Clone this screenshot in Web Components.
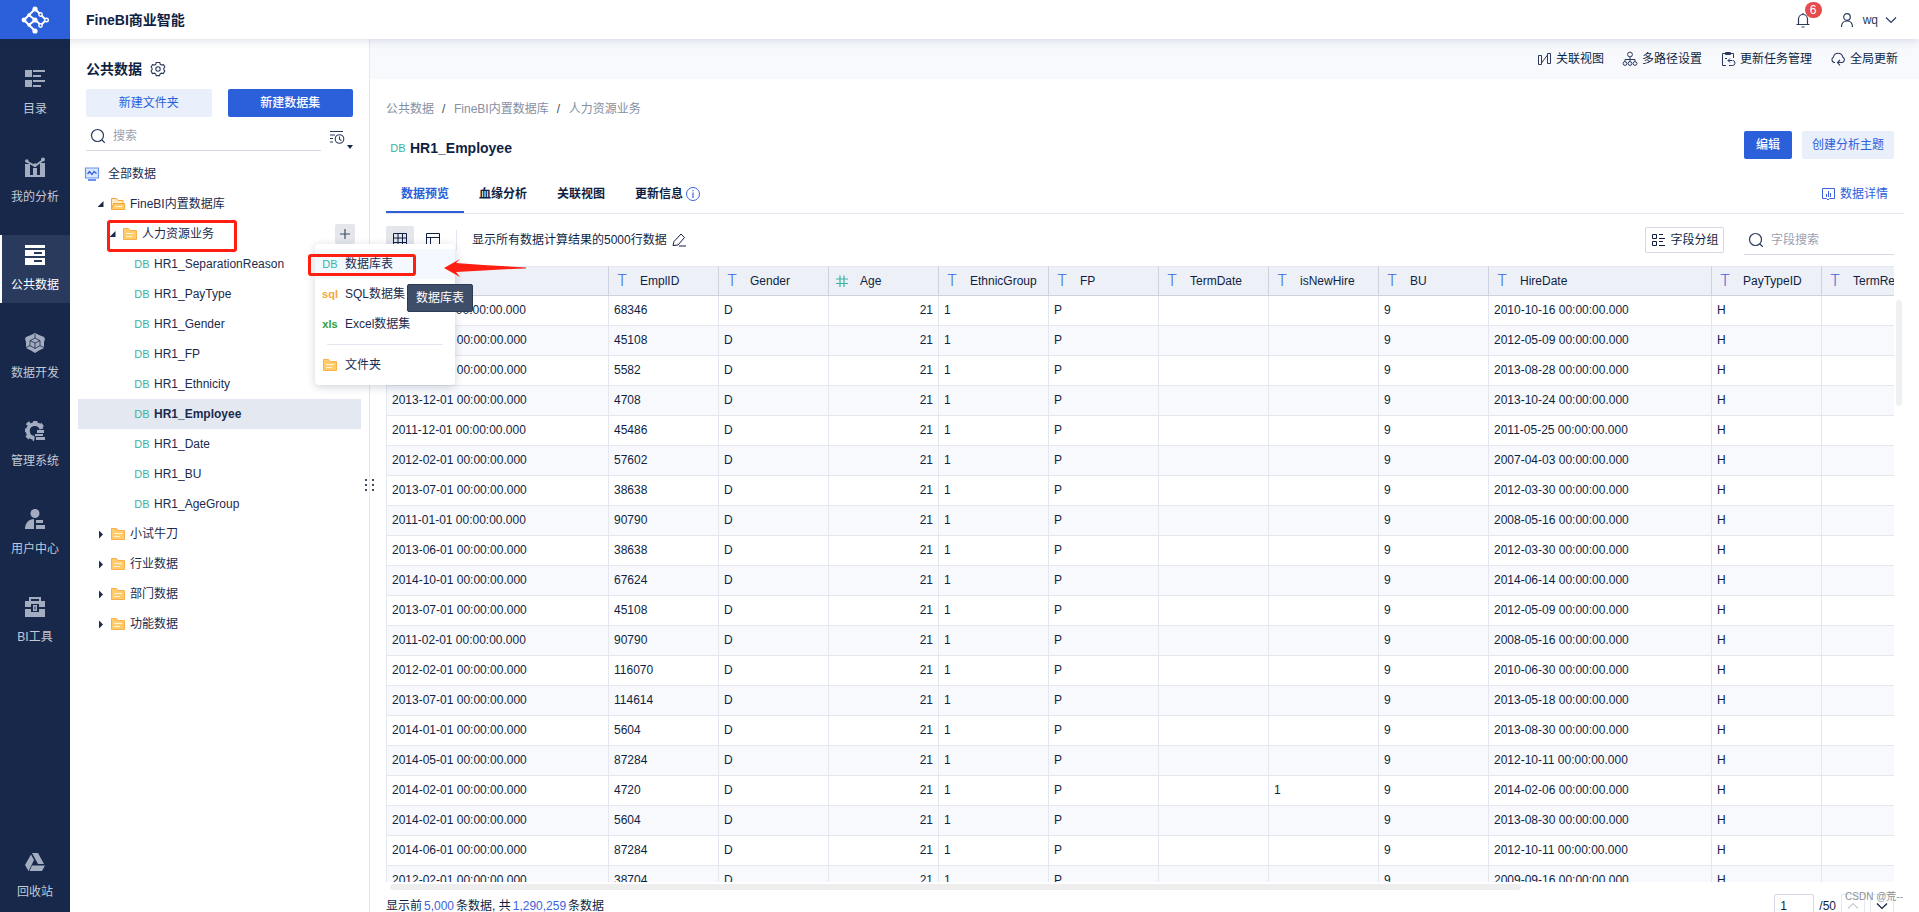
<!DOCTYPE html>
<html lang="zh-CN">
<head>
<meta charset="utf-8">
<title>FineBI商业智能</title>
<style>
  html, body { margin: 0; height: 100%; }
  body {
    font: 12px/20px "Liberation Sans", "Noto Sans CJK SC", sans-serif;
    color: #0f1f43;
    background: #fff;
    overflow: hidden;
    --blue: #2c60db;
    --pale: #e9effb;
    --line: #e4e7ef;
    --navy: #17284b;
    --red: #ff1f12;
  }
</style>
</head>
<body>
<bi-app></bi-app>

<script>
const ICONS = {
  logo: [28, '<g stroke="#fff" stroke-width="2" fill="none"><path d="M14 3 3 14l11 11 M14 14l-6 5 M14 14l6 5 M14 3l6 6 5 5-5 5 M14 14l-6-5"/></g><g fill="#fff"><circle cx="14" cy="3" r="2.6"/><circle cx="3" cy="14" r="2.4"/><circle cx="14" cy="25" r="2.6"/><circle cx="14" cy="14" r="2.6"/><circle cx="8" cy="9" r="1.8"/><circle cx="8" cy="19" r="1.8"/></g><g fill="#2c60db" stroke="#fff" stroke-width="1.4"><circle cx="19.500" cy="8.500" r="1.7"/><circle cx="25.500" cy="14" r="1.8"/><circle cx="19.500" cy="19.500" r="1.7"/></g>'],
  catalog: [20, '<g fill="currentColor"><path d="M0 1h7v7H0zM0 11h7v7H0zM8 1h12v2H8zM8 6h8v2H8zM8 11h12v2H8zM8 16h8v2H8z"/></g>'],
  analysis: [20, '<path d="M1 4l9 5 8-6" fill="none" stroke="currentColor" stroke-width="2"/><g fill="currentColor"><circle cx="1.800" cy="4" r="1.800"/><circle cx="18" cy="2.500" r="2"/><circle cx="10" cy="8" r="1.800"/><path d="M0 7h5v11H0zM8 11h4v7H8zM15 6h5v12h-5zM0 18h20v2H0z"/></g>'],
  data: [20, '<path fill="currentColor" fill-rule="evenodd" d="M0 0h20v3H0zM0 5h20v6H0zM9 7v2h8V7zM0 13h20v7H0zM9 15v2h8v-2z"/>'],
  dev: [20, '<path fill="currentColor" d="M10 0l4 2 5 2 1 2-1 3v6l-5 2.500L10 20l-4-2.500L1 15V9L0 6l1-2 5-2z"/><path d="M10 5l5 2.600v5L10 15.500l-5-2.900v-5zM10 10v5M10 10l5-2.400M10 10L5 7.600M5 12.600l-4 2M15 12.600l4 2M10 5V1" fill="none" stroke="#17284b" stroke-width=".8"/>'],
  manage: [20, '<g fill="none" stroke="currentColor"><path d="M16.500 8A7 7 0 1 0 9.500 17" stroke-width="4"/><path d="M17.500 6A9 9 0 1 0 9 18.500" stroke-width="3" stroke-dasharray="4 3.400"/></g><path fill="currentColor" d="M12 9h7v3h-7zM10 13h8v2h-8zM11 16h9v3h-9z"/>'],
  user2: [20, '<g fill="currentColor"><circle cx="10" cy="4.500" r="4.500"/><path d="M0 20c0-6 4-10 9-10v10zM11 11h7v3h-7zM11 16h9v4h-9z"/></g>'],
  tools: [20, '<path fill="currentColor" fill-rule="evenodd" d="M4 0h12v4h4v6h-6V7H6v3H0V4h4zM6 2v2h8V2zM0 12h6v3h8v-3h6v8H0zM8 8h4v6H8zM9.500 9.500v3h1v-3z"/>'],
  recycle: [20, '<g fill="currentColor"><path d="M7 1h6l6 11h-6zM6 2.500l3 5.500-5.500 11L0 13zM7 13.500h13L17 19H4.500z"/></g>'],
  gear: [16, '<g fill="none" stroke="currentColor" stroke-width="1.100"><path d="M6.200 1.500h3.600l.5 1.800 1.300.8 1.900-.5 1.300 2.400-1 1.400v1.300l1 1.400-1.500 2.500-1.900-.4-1.300.7-.6 1.700H6.200l-.6-1.700-1.300-.7-1.900.4L1.100 10l1-1.400V7.400L1.100 6l1.400-2.400 1.900.5 1.300-.8z"/><circle cx="8" cy="8" r="2.200"/></g>'],
  search: [16, '<g fill="none" stroke="currentColor" stroke-width="1.200"><circle cx="7.500" cy="7.500" r="6"/><path d="M12 12l2.800 2.800"/></g>'],
  filter: [16, '<g fill="none" stroke="currentColor" stroke-width="1.100"><path d="M1 2.500h13M1 6h5M1 9.500h3M1 13h3"/><circle cx="10.500" cy="10" r="4.300"/><path d="M10.500 7.500v3l2 1"/></g>'],
  screen: [16, '<path d="M1.500 2h13v10h-13z" fill="#dbe7ff" stroke="#6a92ea" stroke-width="1.200"/><path d="M3.500 8l2-2.500 2.500 3 2-3 2.500 2" fill="none" stroke="#2c60db" stroke-width="1.300"/><path d="M4 14h8" stroke="#6a92ea" stroke-width="2"/>'],
  folder: [16, '<path d="M1.500 2.500h5l1.500 2h6.500v9h-13z" fill="#ffcb6b" stroke="#f9b04c"/><path d="M4 7.500h8M4 10.500h6" stroke="#fff2d6"/>'],
  folderOpen: [16, '<path d="M1.500 13.500v-11h5l1.500 2h5v3" fill="#ffe9c2" stroke="#f5a83a"/><path d="M1.500 13.500l2-6h11.200v6z" fill="#ffcb6b" stroke="#f5a83a"/><path d="M5 10.500h7" stroke="#fff2d6"/>'],
  right: [16, '<path d="M5 4.500l4 4-4 4z" fill="currentColor"/>'],
  down: [16, '<path d="M9.500 5v6h-6z" fill="currentColor"/>'],
  plus: [16, '<path d="M3 8h10M8 3v10" stroke="currentColor" stroke-width="1.200"/>'],
  relation: [16, '<g fill="none" stroke="currentColor"><path d="M2.500 4.500h3v9h-3zM11.500 2.500h3v10h-3zM5.500 12l6-8"/></g>'],
  paths: [16, '<g fill="none" stroke="currentColor"><circle cx="8" cy="3.500" r="2.400"/><circle cx="3" cy="12.500" r="1.900"/><circle cx="8" cy="12.500" r="1.900"/><circle cx="13" cy="12.500" r="1.900"/><path d="M8 6v4.500M3 10.500V8.500h10v2"/></g>'],
  task: [16, '<g fill="none" stroke="currentColor"><path d="M6 14.500H2.500v-12h11V7M5.500 1.500h5v2h-5zM5 7.500h2M8 9.500h4M10 7.500l-2 2 2 2M9 14.500h3.500a2.500 2.500 0 0 0 0-5"/></g>'],
  cloud: [16, '<g fill="none" stroke="currentColor" stroke-width="1.100"><path d="M5 11.500H4A3 3 0 0 1 3.500 6 4.700 4.700 0 0 1 12.700 6a3 3 0 0 1-.2 5.500H8M10 9l-2.500 2.500L10 14.500"/></g>'],
  bell: [16, '<g fill="none" stroke="currentColor" stroke-width="1.200"><path d="M1.500 12.500h13M3.500 12.500V7a4.500 4.500 0 0 1 9 0v5.500M6.500 15h3M8 1v1.500"/></g>'],
  user: [16, '<g fill="none" stroke="currentColor" stroke-width="1.200"><circle cx="8" cy="5" r="3.300"/><path d="M2.500 15c0-3.500 2-6 5.500-6s5.500 2.500 5.500 6"/></g>'],
  chevron: [16, '<path d="M3 5.500l5 5 5-5" fill="none" stroke="currentColor" stroke-width="1.200"/>'],
  chevronUp: [16, '<path d="M3 10.500l5-5 5 5" fill="none" stroke="currentColor" stroke-width="1.200"/>'],
  info: [16, '<circle cx="8" cy="8" r="6.500" fill="none" stroke="currentColor"/><path d="M8 6.500V12M8 4v1.300" stroke="currentColor" stroke-width="1.200"/>'],
  detail: [16, '<g fill="none" stroke="currentColor"><path d="M2.500 2.500h12v10H9.500L8 14l-1.500-1.500h-4zM6.500 8v3M8.500 5v6M10.500 7v4"/></g>'],
  grid: [16, '<path d="M1.500 1.500h13v13h-13zM1.500 6h13M1.500 10.500h13M6 1.500v13M10.500 1.500v13" fill="none" stroke="currentColor"/>'],
  layout: [16, '<path d="M1.500 1.500h13v13h-13zM1.500 5.500h13M5.500 5.500v9" fill="none" stroke="currentColor"/>'],
  edit: [16, '<path d="M2 13.500l1-4L10 2l3.500 3.500-6.500 7.500zM8 14h7" fill="none" stroke="currentColor"/>'],
  group: [16, '<path d="M2.500 2.500h4v4h-4zM2.500 9.500h4v4h-4zM9 2.500h4M9 6.500h6M9 9.500h4M9 13.500h6" fill="none" stroke="currentColor"/>'],
  hash: [16, '<path d="M2 6h12M2 10.500h12M6 2.500v11.500M10 2.500v11.500" stroke="#3bb3a6" stroke-width="1.200" fill="none"/>']
};

function define(name, css, html, setup) {
  const template = document.createElement('template');
  template.innerHTML = `<style>*{box-sizing:border-box}button,input{font:inherit;color:inherit;margin:0}${css}</style>${html}`;
  customElements.define(name, class extends HTMLElement {
    connectedCallback() {
      if (this.shadowRoot) return;
      const root = this.attachShadow({ mode: 'open' });
      root.append(template.content.cloneNode(true));
      if (setup) setup(root, this);
    }
  });
}

/* Line icon, chosen by its name attribute. */
define('bi-icon', ':host{display:inline-flex;flex:none;width:16px;height:16px}svg{display:block;width:100%;height:100%}', '', (root, host) => {
  const [size, body] = ICONS[host.getAttribute('name')];
  root.innerHTML += `<svg viewBox="0 0 ${size} ${size}" aria-hidden="true">${body}</svg>`;
});

/* Short letter mark for a kind of data set. */
define('bi-mark', `
  :host{display:inline-flex;flex:none;width:16px;justify-content:center;font-size:11px;color:#3bb3a6}
  :host([kind=sql]){color:#f5a83a;font-weight:bold}
  :host([kind=xls]){color:#2f9e3a;font-weight:bold}
  :host([kind=text]){color:#3c63dd;font:300 16px/20px Roboto,"Liberation Sans",sans-serif}`, '<slot></slot>');

define('bi-button', `
  :host{display:inline-flex}
  button{flex:1;height:28px;padding:0 10px;border:0;border-radius:2px;background:var(--pale);color:var(--blue);white-space:nowrap}
  :host([primary]) button{padding:0 12px;background:var(--blue);color:#fff;font-weight:500}`,
  '<button type="button"><slot></slot></button>');

define('bi-search', `
  :host{display:flex}
  label{display:flex;flex:1;align-items:center;gap:7px;padding:0 4px;border-bottom:1px solid #d4d8e2;color:#2b3a5c}
  input{flex:1;min-width:0;width:0;padding:0;border:0;outline:0;background:none;line-height:20px}
  input::placeholder{color:#9aa1b0;opacity:1}`,
  '<label><bi-icon name="search"></bi-icon><input type="text"></label>',
  (root, host) => {
    const input = root.querySelector('input');
    input.placeholder = host.getAttribute('hint');
    input.setAttribute('aria-label', input.placeholder);
  });

define('bi-topbar', `
  :host{display:flex;height:39px;background:#fff;box-shadow:0 2px 8px rgba(23,40,75,.14);position:relative;z-index:2}
  .logo{width:70px;display:flex;align-items:center;justify-content:center;background:var(--blue)}
  .logo bi-icon{width:28px;height:28px}
  h1{flex:1;margin:0 16px;font-size:14px;line-height:40px}
  .tools{display:flex;align-items:center;gap:28px;padding-right:20px;color:#2b3a5c}
  button{display:flex;align-items:center;border:0;padding:0;background:none}
  .bell{position:relative}
  .badge{position:absolute;left:10px;top:-10px;width:17px;height:16px;border-radius:8px;background:#e64c4c;color:#fff;line-height:16px;text-align:center}
  .user span{padding:0 5px 0 8px}`,
  `<div class="logo"><bi-icon name="logo"></bi-icon></div>
   <h1>FineBI商业智能</h1>
   <div class="tools">
     <button class="bell" type="button" aria-label="消息"><bi-icon name="bell"></bi-icon><span class="badge">6</span></button>
     <button class="user" type="button"><bi-icon name="user"></bi-icon><span>wq</span><bi-icon name="chevron"></bi-icon></button>
   </div>`);

define('bi-nav-item', `
  :host{display:block}
  a{display:flex;flex-direction:column;align-items:center;gap:11px;height:68px;padding-top:10px;color:#a4adbf;text-decoration:none;line-height:18px;white-space:nowrap}
  span{color:#c3c9d5}
  bi-icon{width:20px;height:20px}
  :host([active]) a{color:#fff;background:#293a5c;box-shadow:inset 2px 0 #fff}
  :host([active]) span{color:#fff}`,
  '<a href="#"><span><slot></slot></span></a>',
  (root, host) => {
    const icon = document.createElement('bi-icon');
    icon.setAttribute('name', host.getAttribute('icon'));
    root.querySelector('a').prepend(icon);
  });

define('bi-nav', `
  :host{display:flex;flex-direction:column;width:70px;flex:none;background:var(--navy);padding:20px 0 2px}
  nav{display:flex;flex-direction:column;gap:20px;flex:1}
  .last{margin-top:auto}`,
  `<nav>
    <bi-nav-item icon="catalog">目录</bi-nav-item>
    <bi-nav-item icon="analysis">我的分析</bi-nav-item>
    <bi-nav-item icon="data" active>公共数据</bi-nav-item>
    <bi-nav-item icon="dev">数据开发</bi-nav-item>
    <bi-nav-item icon="manage">管理系统</bi-nav-item>
    <bi-nav-item icon="user2">用户中心</bi-nav-item>
    <bi-nav-item icon="tools">BI工具</bi-nav-item>
    <bi-nav-item class="last" icon="recycle">回收站</bi-nav-item>
  </nav>`);

define('bi-tree-row', `
  :host{display:flex;align-items:center;height:30px;margin:0 8px;padding-left:16px;position:relative;white-space:nowrap;color:#1c2b4d}
  :host([level="0"]){padding-left:6px}
  :host([level="2"]){padding-left:28px}
  :host([level="3"]){padding-left:56px}
  :host([selected]){background:#e4e8f1;font-weight:bold}
  .label{flex:1;padding-left:4px}
  :host([level="0"]) .label{padding-left:8px}
  bi-mark{font-weight:normal}`,
  '<span class="label"><slot></slot></span><slot name="action"></slot>',
  (root, host) => {
    const label = root.querySelector('.label');
    const fold = host.getAttribute('fold');
    const kind = host.getAttribute('kind');
    let html = fold ? `<bi-icon name="${fold}"></bi-icon>` : '';
    html += kind === 'db' ? '<bi-mark>DB</bi-mark>' : `<bi-icon name="${kind}"></bi-icon>`;
    label.insertAdjacentHTML('beforebegin', html);
  });

/* Red frame drawn over a row to call attention to it. */
define('bi-highlight', ':host{position:absolute;border:3px solid var(--red);border-radius:3px;pointer-events:none}', '');

define('bi-menu', `
  :host{display:block;width:140px;padding:5px 0;background:#fff;border-radius:4px;box-shadow:0 2px 8px rgba(23,40,75,.2);font-weight:normal}
  ul{list-style:none;margin:0;padding:0}
  li{position:relative}
  button{display:flex;align-items:center;gap:7px;width:100%;height:30px;padding:0 7px;border:0;background:none;white-space:nowrap;color:#1c2b4d}
  .on button{background:#f3f9ff}
  .sep{height:1px;margin:5px 12px;background:var(--line)}
  bi-highlight{left:-7px;top:5px;width:108px;height:22px}
  .tip{position:absolute;left:92px;top:35px;z-index:1;height:28px;padding:0 8px;border:1px solid #2c3a52;border-radius:2px;background:#3f4e68;color:#fff;line-height:26px;white-space:nowrap}
  svg{position:absolute;left:129px;top:10px;width:82px;height:18px}`,
  `<ul>
    <li class="on"><button type="button"><bi-mark>DB</bi-mark>数据库表</button>
      <bi-highlight></bi-highlight>
      <svg viewBox="0 0 82 18" aria-hidden="true"><path d="M0 9L16 0l-4 4c24 2 46 3 70 4.500v1C58 10 36 12 12 13l4 5z" fill="#ff1f12"/></svg>
      <span class="tip" role="tooltip">数据库表</span></li>
    <li><button type="button"><bi-mark kind="sql">sql</bi-mark>SQL数据集</button></li>
    <li><button type="button"><bi-mark kind="xls">xls</bi-mark>Excel数据集</button></li>
    <li class="sep" role="separator"></li>
    <li><button type="button"><bi-icon name="folder"></bi-icon>文件夹</button></li>
  </ul>`);

define('bi-sidebar', `
  :host{display:block;width:300px;flex:none;border-right:1px solid var(--line);position:relative;z-index:1;background:#fff}
  .head{display:flex;align-items:center;gap:8px;padding:20px 16px 10px}
  h2{margin:0;font-size:14px;line-height:20px}
  .head bi-icon{color:#2b3a5c}
  .buttons{display:grid;grid-template-columns:1fr 1fr;gap:16px;padding:0 16px}
  .find{display:flex;padding:0 16px;height:34px;position:relative}
  .find bi-search{width:235px;padding-top:5px}
  .sort{display:flex;align-items:center;margin-left:8px;border:0;background:none;padding:6px 0 0;color:#2b3a5c}
  .sort i{position:absolute;right:16px;bottom:2px;border:3px solid transparent;border-top:4px solid #17284b;border-bottom:0}
  .tree{padding-top:8px}
  .add{display:flex;align-items:center;justify-content:center;width:20px;height:20px;margin-right:6px;border:0;border-radius:2px;padding:0;background:#e4e6eb;color:#3d4d66}
  bi-highlight{left:29px;top:1px;width:130px;height:32px}
  bi-menu{position:absolute;left:237px;top:25px;z-index:3}
  .grip{position:absolute;right:-5px;top:440px;width:9px;height:14px;background:radial-gradient(circle at 1px 1px,#3d4d66 1px,transparent 1px) 0 0/7px 5px}`,
  `<div class="head"><h2>公共数据</h2><bi-icon name="gear"></bi-icon></div>
   <div class="buttons"><bi-button>新建文件夹</bi-button><bi-button primary>新建数据集</bi-button></div>
   <div class="find"><bi-search hint="搜索"></bi-search><button class="sort" type="button" aria-label="排序"><bi-icon name="filter"></bi-icon><i></i></button></div>
   <div class="tree">
     <bi-tree-row level="0" kind="screen">全部数据</bi-tree-row>
     <bi-tree-row level="1" fold="down" kind="folderOpen">FineBI内置数据库</bi-tree-row>
     <bi-tree-row level="2" fold="down" kind="folder">人力资源业务
       <button slot="action" class="add" type="button" aria-label="新建"><bi-icon name="plus"></bi-icon></button>
       <bi-highlight slot="action"></bi-highlight>
       <bi-menu slot="action"></bi-menu>
     </bi-tree-row>
     <bi-tree-row level="3" kind="db">HR1_SeparationReason</bi-tree-row>
     <bi-tree-row level="3" kind="db">HR1_PayType</bi-tree-row>
     <bi-tree-row level="3" kind="db">HR1_Gender</bi-tree-row>
     <bi-tree-row level="3" kind="db">HR1_FP</bi-tree-row>
     <bi-tree-row level="3" kind="db">HR1_Ethnicity</bi-tree-row>
     <bi-tree-row level="3" kind="db" selected>HR1_Employee</bi-tree-row>
     <bi-tree-row level="3" kind="db">HR1_Date</bi-tree-row>
     <bi-tree-row level="3" kind="db">HR1_BU</bi-tree-row>
     <bi-tree-row level="3" kind="db">HR1_AgeGroup</bi-tree-row>
     <bi-tree-row level="1" fold="right" kind="folder">小试牛刀</bi-tree-row>
     <bi-tree-row level="1" fold="right" kind="folder">行业数据</bi-tree-row>
     <bi-tree-row level="1" fold="right" kind="folder">部门数据</bi-tree-row>
     <bi-tree-row level="1" fold="right" kind="folder">功能数据</bi-tree-row>
   </div>
   <div class="grip"></div>`);

const COLUMNS = ['date', 'EmplID', 'Gender', 'Age', 'EthnicGroup', 'FP', 'TermDate', 'isNewHire', 'BU', 'HireDate', 'PayTypeID', 'TermReason'];
const ROWS = [
  ['2013-11-01', '68346', '2010-10-16'], ['2013-02-01', '45108', '2012-05-09'], ['2013-12-01', '5582', '2013-08-28'],
  ['2013-12-01', '4708', '2013-10-24'], ['2011-12-01', '45486', '2011-05-25'], ['2012-02-01', '57602', '2007-04-03'],
  ['2013-07-01', '38638', '2012-03-30'], ['2011-01-01', '90790', '2008-05-16'], ['2013-06-01', '38638', '2012-03-30'],
  ['2014-10-01', '67624', '2014-06-14'], ['2013-07-01', '45108', '2012-05-09'], ['2011-02-01', '90790', '2008-05-16'],
  ['2012-02-01', '116070', '2010-06-30'], ['2013-07-01', '114614', '2013-05-18'], ['2014-01-01', '5604', '2013-08-30'],
  ['2014-05-01', '87284', '2012-10-11'], ['2014-02-01', '4720', '2014-02-06', '1'], ['2014-02-01', '5604', '2013-08-30'],
  ['2014-06-01', '87284', '2012-10-11'], ['2012-02-01', '38704', '2009-09-16']
];

define('bi-data-table', `
  :host{display:flex;flex-direction:column;flex:1;min-height:0;position:relative}
  .view{flex:1;min-height:0;overflow:hidden;border-left:1px solid var(--line)}
  table{border-collapse:separate;border-spacing:0;table-layout:fixed;width:1545px}
  col{width:110px}
  col.first{width:222px}
  col.wide{width:223px}
  th,td{height:30px;padding:0 5px;border-right:1px solid var(--line);border-bottom:1px solid var(--line);text-align:left;font-weight:normal;white-space:nowrap;overflow:hidden;line-height:20px}
  td{padding-bottom:2px}
  th{background:#edf0f6;border-color:#cdd2de;border-top:1px solid var(--line)}
  th div{display:flex;align-items:center;gap:10px}
  tbody tr:nth-child(even){background:#f7f9fd}
  td.num{text-align:right}
  .h{height:6px;width:75%;margin:2px 0 4px 4px;border-radius:3px;background:#eee}
  .v{position:absolute;right:-8px;top:34px;width:6px;height:106px;border-radius:3px;background:#eff0f2}`,
  `<div class="view"><table><colgroup></colgroup><thead><tr></tr></thead><tbody></tbody></table></div><div class="h"></div><div class="v"></div>`,
  root => {
    root.querySelector('colgroup').innerHTML = COLUMNS.map((c, i) => `<col class="${i === 0 ? 'first' : i === 9 ? 'wide' : ''}">`).join('');
    root.querySelector('thead tr').innerHTML = COLUMNS.map(c =>
      `<th scope="col"><div>${c === 'Age' ? '<bi-icon name="hash"></bi-icon>' : '<bi-mark kind="text">T</bi-mark>'}${c}</div></th>`).join('');
    root.querySelector('tbody').innerHTML = ROWS.map(([date, id, hire, isNew = '']) => {
      const cells = [date + ' 00:00:00.000', id, 'D', '21', '1', 'P', '', isNew, '9', hire + ' 00:00:00.000', 'H', ''];
      return '<tr>' + cells.map((v, i) => `<td${i === 3 ? ' class="num"' : ''}>${v}</td>`).join('') + '</tr>';
    }).join('');
  });

define('bi-main', `
  :host{display:flex;flex-direction:column;flex:1;min-width:0}
  a{color:inherit;text-decoration:none}
  .bar{display:flex;justify-content:flex-end;align-items:center;gap:18px;height:40px;padding-right:21px;background:#f7f9fd;flex:none}
  .bar a,.detail{display:flex;align-items:center;gap:4px}
  .bar bi-icon{color:#2b3a5c}
  .body{display:flex;flex-direction:column;flex:1;min-height:0;padding:20px 25px 0 16px}
  .crumbs{display:flex;gap:8px;color:#868fa3;flex:none}
  .crumbs i{width:4px;font-style:normal;color:#3d4d66}
  .title{display:flex;align-items:flex-end;gap:10px;margin-top:12px;flex:none}
  h2{display:flex;align-items:center;gap:4px;flex:1;margin:0;padding-left:4px;font-size:14px;line-height:22px}
  h2 bi-mark{font-weight:normal}
  .tabs{display:flex;height:39px;margin:16px -10px 0 0;border-bottom:1px solid var(--line);font-weight:bold;flex:none}
  .tabs a{display:flex;align-items:center;gap:2px;padding:0 15px}
  .tabs a.on{color:var(--blue);box-shadow:inset 0 -2px var(--blue)}
  .tabs bi-icon{color:#3c63dd}
  .tabs .detail{margin-left:auto;padding-right:16px;color:var(--blue);font-weight:normal;gap:4px}
  .tools{display:flex;align-items:center;height:52px;flex:none}
  .tools button{display:flex;align-items:center;justify-content:center;border:0;border-radius:2px;padding:0;width:28px;height:28px;background:none}
  .tools button.on{background:#e4e6eb}
  .tools .second{margin-left:5px}
  .rule{width:1px;height:20px;margin:0 15px 0 9px;background:var(--line)}
  .tools p{display:flex;align-items:center;gap:4px;margin:0;flex:1}
  .tools button.group{width:79px;height:26px;gap:4px;border:1px solid #d4d8e2;margin-right:20px}
  bi-search{width:150px;height:29px}
  .foot{display:flex;align-items:center;height:24px;margin-bottom:-6px;flex:none}
  .foot span{flex:1}
  b{margin:0 2px;font-weight:normal;color:#3c63dd}
  .foot input{width:40px;height:24px;padding:0 5px;border:1px solid #d4d8e2;border-radius:2px;margin-right:5px;background:#fff}
  .foot label{display:flex;align-items:center}
  .foot button{display:flex;align-items:center;justify-content:center;width:24px;height:24px;padding:0;margin-left:5px;border:1px solid var(--line);border-radius:2px;background:#fff}
  .foot button:disabled{color:#c6ccd8}`,
  `<div class="bar">
     <a href="#"><bi-icon name="relation"></bi-icon>关联视图</a>
     <a href="#"><bi-icon name="paths"></bi-icon>多路径设置</a>
     <a href="#"><bi-icon name="task"></bi-icon>更新任务管理</a>
     <a href="#"><bi-icon name="cloud"></bi-icon>全局更新</a>
   </div>
   <div class="body">
     <nav class="crumbs"><a href="#">公共数据</a><i>/</i><a href="#">FineBI内置数据库</a><i>/</i><a href="#">人力资源业务</a></nav>
     <div class="title"><h2><bi-mark>DB</bi-mark>HR1_Employee</h2><bi-button primary>编辑</bi-button><bi-button>创建分析主题</bi-button></div>
     <nav class="tabs">
       <a href="#" class="on">数据预览</a><a href="#">血缘分析</a><a href="#">关联视图</a><a href="#">更新信息<bi-icon name="info"></bi-icon></a>
       <a href="#" class="detail"><bi-icon name="detail"></bi-icon>数据详情</a>
     </nav>
     <div class="tools">
       <button type="button" class="on" aria-label="表格"><bi-icon name="grid"></bi-icon></button>
       <button type="button" class="second" aria-label="结构"><bi-icon name="layout"></bi-icon></button>
       <span class="rule"></span>
       <p>显示所有数据计算结果的5000行数据<bi-icon name="edit"></bi-icon></p>
       <button type="button" class="group"><bi-icon name="group"></bi-icon>字段分组</button>
       <bi-search hint="字段搜索"></bi-search>
     </div>
     <bi-data-table></bi-data-table>
     <div class="foot"><span>显示前<b>5,000</b>条数据, 共<b>1,290,259</b>条数据</span>
       <label><input type="text" value="1" aria-label="页码">/50</label>
       <button type="button" disabled aria-label="上一页"><bi-icon name="chevronUp"></bi-icon></button>
       <button type="button" aria-label="下一页"><bi-icon name="chevron"></bi-icon></button></div>
   </div>`);

define('bi-app', `
  :host{display:flex;flex-direction:column;height:100vh;overflow:hidden;position:relative}
  .work{display:flex;flex:1;min-height:0}
  .stamp{position:absolute;right:16px;bottom:5px;font-size:10px;color:#8c9099}`,
  `<bi-topbar></bi-topbar>
   <div class="work"><bi-nav></bi-nav><bi-sidebar></bi-sidebar><bi-main></bi-main></div>
   <div class="stamp">CSDN @荒--</div>`);
</script>
</body>
</html>
